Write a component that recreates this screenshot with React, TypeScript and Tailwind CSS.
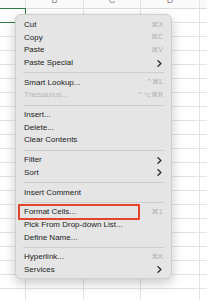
import React from "react";

type Item =
  | { type: "sep" }
  | { type: "item"; label: string; shortcut?: string; sub?: boolean; disabled?: boolean; boxed?: boolean };

const items: Item[] = [
  { type: "item", label: "Cut", shortcut: "⌘X" },
  { type: "item", label: "Copy", shortcut: "⌘C" },
  { type: "item", label: "Paste", shortcut: "⌘V" },
  { type: "item", label: "Paste Special", sub: true },
  { type: "sep" },
  { type: "item", label: "Smart Lookup...", shortcut: "^⌘L" },
  { type: "item", label: "Thesaurus...", shortcut: "^⌥⌘R", disabled: true },
  { type: "sep" },
  { type: "item", label: "Insert..." },
  { type: "item", label: "Delete..." },
  { type: "item", label: "Clear Contents" },
  { type: "sep" },
  { type: "item", label: "Filter", sub: true },
  { type: "item", label: "Sort", sub: true },
  { type: "sep" },
  { type: "item", label: "Insert Comment" },
  { type: "sep" },
  { type: "item", label: "Format Cells...", shortcut: "⌘1", boxed: true },
  { type: "item", label: "Pick From Drop-down List..." },
  { type: "item", label: "Define Name..." },
  { type: "sep" },
  { type: "item", label: "Hyperlink...", shortcut: "⌘K" },
  { type: "item", label: "Services", sub: true },
];

const rows = Array.from({ length: 21 }, (_, i) => i);

function Chevron() {
  return (
    <svg width="5" height="7" viewBox="0 0 5 7" className="mr-[1px]">
      <path d="M1 0.8 L3.9 3.5 L1 6.2" fill="none" stroke="#2a2a2a" strokeWidth="1.3" strokeLinecap="round" strokeLinejoin="round" />
    </svg>
  );
}

function GridRow({ selected }: { selected: boolean }) {
  return (
    <div className="flex h-[14px] border-b border-[#e3e3e3]">
      <div className={selected ? "w-[26px] h-[15px] -mt-[1px] border-[1.5px] border-l-0 border-[#2f7a4d] shrink-0" : "w-[26px] border-r border-[#e3e3e3] shrink-0"} />
      <div className="w-[58px] border-r border-[#e3e3e3] shrink-0" />
      <div className="w-[57px] border-r border-[#e3e3e3] shrink-0" />
      <div className="w-[59px] border-r border-[#e3e3e3] shrink-0" />
      <div className="flex-1" />
    </div>
  );
}

export default function App() {
  return (
    <div
      className="relative w-[207px] h-[300px] overflow-hidden bg-white"
      style={{ fontFamily: '"Liberation Sans", "DejaVu Sans", Arial, sans-serif' }}
    >
      {/* header */}
      <div className="flex h-[9px] border-b border-[#dcdcdc] bg-[#fafafa] overflow-hidden">
        <div className="w-[26px] border-r border-[#e3e3e3] shrink-0" />
        <div className="w-[58px] border-r border-[#e3e3e3] shrink-0 flex justify-center">
          <span className="text-[9px] leading-none text-[#8a8a8a] -mt-[4px]">B</span>
        </div>
        <div className="w-[57px] border-r border-[#e3e3e3] shrink-0 flex justify-center">
          <span className="text-[9px] leading-none text-[#8a8a8a] -mt-[4px]">C</span>
        </div>
        <div className="w-[59px] border-r border-[#e3e3e3] shrink-0 flex justify-center">
          <span className="text-[9px] leading-none text-[#8a8a8a] -mt-[4px]">D</span>
        </div>
        <div className="flex-1" />
      </div>
      {rows.map((r) => (
        <GridRow key={r} selected={r === 0} />
      ))}

      {/* context menu */}
      <div className="absolute left-[15px] top-[14px] w-[157px] rounded-[6px] bg-[#e5e5e5] border border-[#cfcfcf] shadow-[0_4px_12px_rgba(0,0,0,0.22)] pt-[4px] pb-[2px] flex flex-col">
        {items.map((it, i) =>
          it.type === "sep" ? (
            <div key={i} className="h-[7.2px] shrink-0 flex items-center px-[7px]">
              <div className="h-px w-full bg-[#cdcdcd]" />
            </div>
          ) : (
            <div key={i} className="relative h-[12.6px] shrink-0 flex items-center justify-between pl-[8px] pr-[8px]">
              <span className={it.disabled ? "text-[8px] leading-none text-[#b4b4b4] whitespace-nowrap" : "text-[8px] leading-none text-[#222222] whitespace-nowrap"}>
                {it.label}
              </span>
              {it.shortcut ? (
                <span className="text-[7px] leading-none text-[#b2b2b2] whitespace-nowrap" style={{ fontFamily: '"DejaVu Sans", sans-serif' }}>
                  {it.shortcut}
                </span>
              ) : null}
              {it.sub ? <Chevron /> : null}
              {it.boxed ? (
                <span className="absolute left-[2px] top-[-2px] w-[122px] h-[16px] border-2 border-[#e4432d] rounded-[1px]" />
              ) : null}
            </div>
          )
        )}
      </div>
    </div>
  );
}
